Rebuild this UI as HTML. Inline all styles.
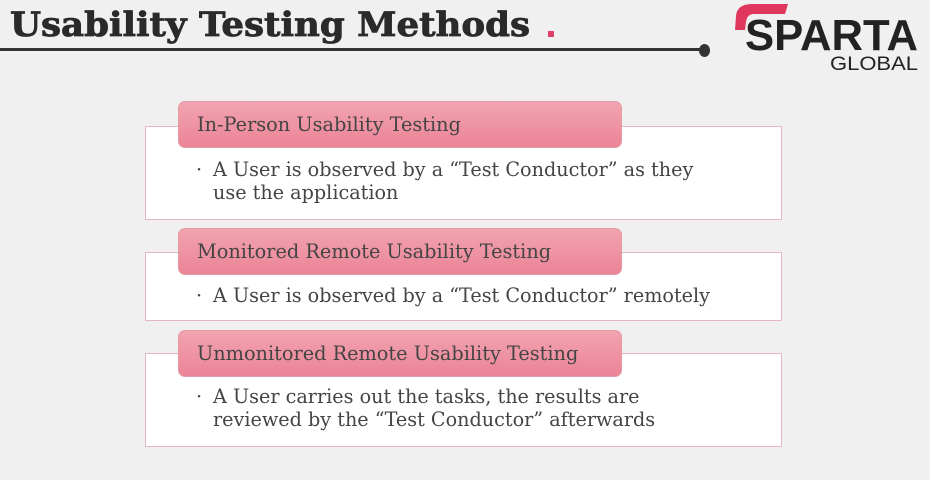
<!DOCTYPE html>
<html><head><style>
body{margin:0;width:930px;height:480px;background:#f0f0f0;position:relative;overflow:hidden;font-family:"DejaVu Serif",serif;}
.dot{position:absolute;left:548px;top:31px;width:6px;height:6px;background:#e0406a;}
.line{position:absolute;left:0;top:48px;width:705px;height:3px;background:#333;}
.ball{position:absolute;left:699px;top:44px;width:11px;height:13px;border-radius:50%;background:#333;}
.box{position:absolute;left:145px;width:635px;background:#fff;border:1px solid #e6b7c2;}
.hd{position:absolute;left:178px;width:444px;height:47px;border-radius:7px;background:linear-gradient(#f2a3b0,#eb8497);border:1px solid #e39aa9;box-sizing:border-box;font-size:19.3px;color:#444;padding:11px 0 0 18px;white-space:nowrap;}
.bt{position:absolute;left:196px;font-size:19.2px;color:#444;line-height:23px;white-space:nowrap;}
.bt span{position:absolute;left:0;}
.bt div{margin-left:17px;}
</style></head><body>
<svg style="position:absolute;left:0;top:0" width="560" height="45">
<text x="10" y="36" font-family="DejaVu Serif,serif" font-weight="bold" font-size="34" fill="#2a2a2a" stroke="#2a2a2a" stroke-width="0.8" textLength="520" lengthAdjust="spacingAndGlyphs">Usability Testing Methods</text>
</svg>
<div class="dot"></div>
<div class="line"></div><div class="ball"></div>
<svg style="position:absolute;left:728px;top:0" width="200" height="75">
<path d="M7 30 L8 16 Q9 4 24 4 L60 4 L57 14 L26 14 Q19 14 18 22 L17 30 Z" fill="#e0375f"/>
<text x="17" y="50" font-family="Liberation Sans,sans-serif" font-weight="bold" font-size="44" fill="#222" textLength="173" lengthAdjust="spacingAndGlyphs">SPARTA</text>
<text x="102" y="70" font-family="Liberation Sans,sans-serif" font-size="19" fill="#222" textLength="88" lengthAdjust="spacingAndGlyphs">GLOBAL</text>
</svg>
<div class="box" style="top:126px;height:92px"></div>
<div class="hd" style="top:101px">In-Person Usability Testing</div>
<div class="bt" style="top:158px"><span>·</span><div>A User is observed by a “Test Conductor” as they<br>use the application</div></div>
<div class="box" style="top:252px;height:67px"></div>
<div class="hd" style="top:228px">Monitored Remote Usability Testing</div>
<div class="bt" style="top:284px"><span>·</span><div>A User is observed by a “Test Conductor” remotely</div></div>
<div class="box" style="top:353px;height:92px"></div>
<div class="hd" style="top:330px">Unmonitored Remote Usability Testing</div>
<div class="bt" style="top:385px"><span>·</span><div>A User carries out the tasks, the results are<br>reviewed by the “Test Conductor” afterwards</div></div>
</body></html>
